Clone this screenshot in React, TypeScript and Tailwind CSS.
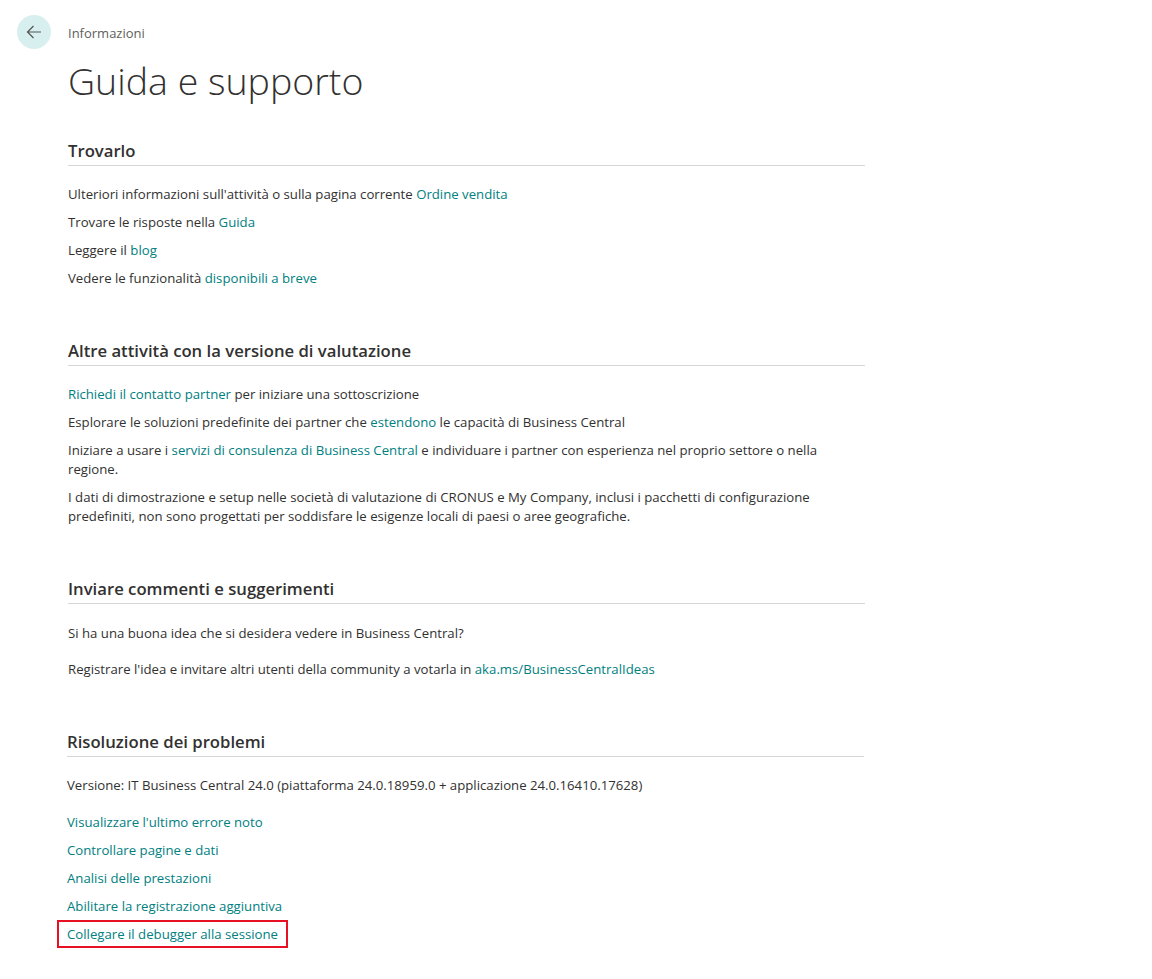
import React from 'react';

const Link = ({ children }: { children: React.ReactNode }) => (
  <a href="#" className="text-[#00807f] hover:underline">{children}</a>
);

const Section = ({ title, children }: { title: string; children: React.ReactNode }) => (
  <section className="w-[797px]">
    <h2 className="text-[16.7px] font-semibold text-[#323130] leading-[24px] pb-[2px] border-b border-[#d6d6d6]">
      {title}
    </h2>
    {children}
  </section>
);

const App = () => {
  return (
    <div className="min-h-screen bg-white text-[#323130] font-['Open_Sans',sans-serif] text-[13.2px]">
      {/* Header */}
      <div className="flex items-center gap-[17px] pl-[17px] pt-[15px]">
        <button className="w-[34px] h-[34px] rounded-full bg-[#d8eff0] flex items-center justify-center">
          <svg width="18" height="18" viewBox="0 0 18 18" fill="none" stroke="#555" strokeWidth="1.2">
            <path d="M16 9H2.5M8.5 3L2.5 9l6 6" />
          </svg>
        </button>
        <span className="text-[13px] text-[#605e5c] pt-[4px]">Informazioni</span>
      </div>

      <div className="pl-[68px]">
        <h1 className="text-[37.5px] font-light leading-[48px] mt-[8px] text-[#323130]">Guida e supporto</h1>

        {/* Trovarlo */}
        <div className="mt-[34px]">
          <Section title="Trovarlo">
            <div className="flex flex-col gap-[10px] mt-[19px] leading-[18px]">
              <p>Ulteriori informazioni sull'attività o sulla pagina corrente <Link>Ordine vendita</Link></p>
              <p>Trovare le risposte nella <Link>Guida</Link></p>
              <p>Leggere il <Link>blog</Link></p>
              <p>Vedere le funzionalità <Link>disponibili a breve</Link></p>
            </div>
          </Section>
        </div>

        {/* Valutazione */}
        <div className="mt-[52px]">
          <Section title="Altre attività con la versione di valutazione">
            <div className="flex flex-col gap-[9px] mt-[19px] leading-[19px]">
              <p><Link>Richiedi il contatto partner</Link> per iniziare una sottoscrizione</p>
              <p>Esplorare le soluzioni predefinite dei partner che <Link>estendono</Link> le capacità di Business Central</p>
              <p className="w-[765px]">Iniziare a usare i <Link>servizi di consulenza di Business Central</Link> e individuare i partner con esperienza nel proprio settore o nella regione.</p>
              <p className="w-[765px]">I dati di dimostrazione e setup nelle società di valutazione di CRONUS e My Company, inclusi i pacchetti di configurazione predefiniti, non sono progettati per soddisfare le esigenze locali di paesi o aree geografiche.</p>
            </div>
          </Section>
        </div>

        {/* Commenti */}
        <div className="mt-[51px]">
          <Section title="Inviare commenti e suggerimenti">
            <div className="flex flex-col gap-[18px] mt-[20px] leading-[18px]">
              <p>Si ha una buona idea che si desidera vedere in Business Central?</p>
              <p>Registrare l'idea e invitare altri utenti della community a votarla in <Link>aka.ms/BusinessCentralIdeas</Link></p>
            </div>
          </Section>
        </div>

        {/* Problemi */}
        <div className="mt-[52px] -ml-px">
          <Section title="Risoluzione dei problemi">
            <p className="mt-[19px] leading-[18px]">Versione: IT Business Central 24.0 (piattaforma 24.0.18959.0 + applicazione 24.0.16410.17628)</p>
            <div className="flex flex-col gap-[10px] mt-[19px] leading-[18px] items-start">
              <Link>Visualizzare l'ultimo errore noto</Link>
              <Link>Controllare pagine e dati</Link>
              <Link>Analisi delle prestazioni</Link>
              <Link>Abilitare la registrazione aggiuntiva</Link>
              <span className="-ml-[10px] px-[8px] py-[3px] -my-[5px] border-2 border-[#e81123]">
                <Link>Collegare il debugger alla sessione</Link>
              </span>
            </div>
          </Section>
        </div>
      </div>
    </div>
  );
};

export default App;
